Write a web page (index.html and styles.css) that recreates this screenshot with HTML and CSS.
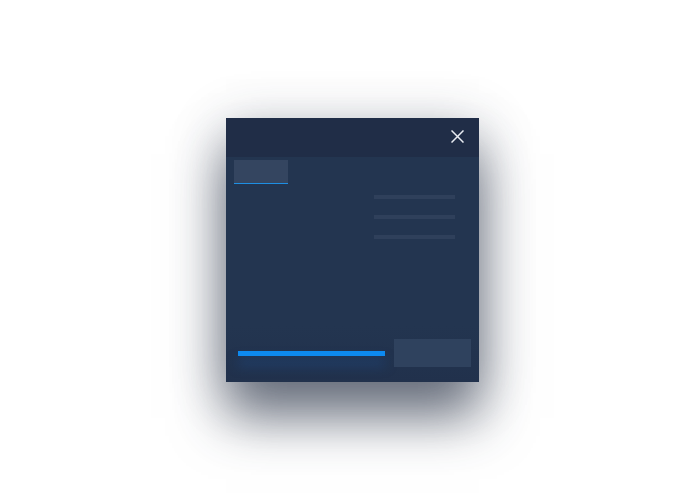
FILE: index.html
```html
<!DOCTYPE html>
<html>
<head>
<meta charset="utf-8">
<link rel="stylesheet" href="styles.css">
</head>
<body>
<div class="stage">
  <div class="card">
    <div class="header">
      <svg class="close" width="13" height="13" viewBox="0 0 13 13">
        <path d="M0.5 0.5 L12.5 12.5 M12.5 0.5 L0.5 12.5" stroke="#e8ecf2" stroke-width="1.5" fill="none"/>
      </svg>
    </div>
    <div class="body">
      <div class="tab"></div>
      <div class="lines">
        <div class="line"></div>
        <div class="line"></div>
        <div class="line"></div>
      </div>
      <div class="footer">
        <div class="progress"></div>
        <div class="button"></div>
      </div>
    </div>
  </div>
</div>
</body>
</html>
```
FILE: styles.css
```css
html, body {
  margin: 0;
  padding: 0;
  background: #ffffff;
}
.stage {
  height: 500px;
  display: flex;
  justify-content: center;
  align-items: center;
  padding-left: 5px;
  box-sizing: border-box;
}
.card {
  width: 253px;
  height: 264px;
  display: flex;
  flex-direction: column;
  background: #233550;
  box-shadow: 0 36px 50px rgba(40, 50, 70, 0.62), 0 10px 50px rgba(40, 50, 70, 0.3);
}
.header {
  height: 39px;
  flex: none;
  background: #202d47;
  display: flex;
  justify-content: flex-end;
  align-items: flex-start;
  padding: 12px 15px 0 0;
  box-sizing: border-box;
}
.close {
  display: block;
}
.body {
  flex: 1;
  display: flex;
  flex-direction: column;
  padding: 3px 8px 15px 8px;
  background: linear-gradient(#233550 75%, #21314c);
}
.tab {
  width: 54px;
  height: 23px;
  background: #344560;
  border-bottom: 1px solid #1e8fe3;
}
.lines {
  align-self: flex-end;
  margin: 11px 16px 0 0;
  display: flex;
  flex-direction: column;
  gap: 16px;
}
.line {
  width: 81px;
  height: 4px;
  background: #2f405b;
}
.footer {
  margin-top: auto;
  display: flex;
  align-items: center;
}
.progress {
  width: 147px;
  height: 5px;
  margin-left: 4px;
  background: #0d8af0;
  box-shadow: 0 9px 12px rgba(28, 80, 150, 0.6);
}
.button {
  width: 77px;
  height: 28px;
  margin-left: auto;
  background: #2f425e;
}
```
